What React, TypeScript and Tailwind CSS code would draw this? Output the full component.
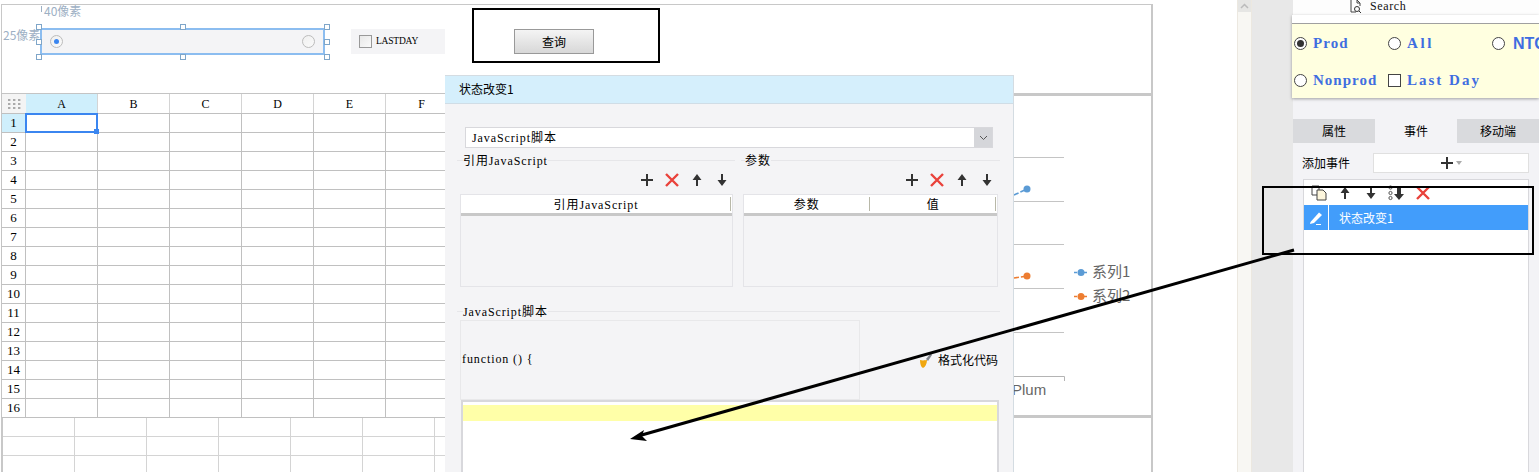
import React from "react";

const SERIF = "font-['Liberation_Serif','Noto_Sans_CJK_SC',serif]";
const CJK = "font-['Noto_Sans_CJK_SC','Liberation_Sans',sans-serif]";
const COLS = ["A", "B", "C", "D", "E", "F", "G", "H", "I", "J", "K", "L", "M"];
const ROWS = Array.from({ length: 16 }, (_, i) => i + 1);

function Plus({ size = 14 }: { size?: number }) {
  return (
    <svg width={size} height={size} viewBox="0 0 14 14">
      <path d="M7 1v12M1 7h12" stroke="#333" strokeWidth="2" fill="none" />
    </svg>
  );
}
function Cross({ size = 14 }: { size?: number }) {
  return (
    <svg width={size} height={size} viewBox="0 0 14 14">
      <path d="M1 1l12 12M13 1L1 13" stroke="#e9423b" strokeWidth="2.4" fill="none" />
    </svg>
  );
}
function Up() {
  return (
    <svg width="12" height="14" viewBox="0 0 12 14">
      <path d="M6 1l4.5 6H7v6H5V7H1.500z" fill="#333" />
    </svg>
  );
}
function Down() {
  return (
    <svg width="12" height="14" viewBox="0 0 12 14">
      <path d="M6 13L1.500 7H5V1h2v6h3.500z" fill="#333" />
    </svg>
  );
}

function Toolbar() {
  return (
    <div className="flex items-center justify-end h-[26px] pr-px">
      {[<Plus key="p" />, <Cross key="c" />, <Up key="u" />, <Down key="d" />].map((icon, i) => (
        <div key={i} className="w-[25px] flex justify-center">
          {icon}
        </div>
      ))}
    </div>
  );
}

function Legend({ title, stub }: { title: string; stub: string }) {
  return (
    <div className="flex items-center h-[14px]">
      <div className={`h-px bg-[#e6e6e9] ${stub}`} />
      <span className={`${SERIF} text-[12px] leading-[14px] tracking-[0.9px] text-black pt-[2px] whitespace-nowrap`}>{title}</span>
      <div className="flex-1 h-px bg-[#e6e6e9]" />
    </div>
  );
}

function Radio({ on }: { on?: boolean }) {
  return (
    <span className="w-[13px] h-[13px] rounded-full border-[1.5px] border-[#bcbcbc] bg-gradient-to-br from-[#f0f0f0] to-[#fafafa] flex items-center justify-center shrink-0">
      {on && <span className="w-[5px] h-[5px] rounded-full bg-[#3b86f0]" />}
    </span>
  );
}

function YRadio({ on }: { on?: boolean }) {
  return (
    <span className="w-[13px] h-[13px] rounded-full border-[1.5px] border-[#444] bg-white flex items-center justify-center shrink-0">
      {on && <span className="w-[7px] h-[7px] rounded-full bg-[#333]" />}
    </span>
  );
}

function Handle({ className }: { className: string }) {
  return <span className={`absolute w-[6px] h-[6px] border border-[#7fa6c9] bg-white ${className}`} />;
}

function Sheet() {
  return (
    <div className={`w-[1012px] h-[325px] overflow-hidden border-t border-l border-[#c4c4c4] ${SERIF}`}>
      <div className="flex h-[20px] border-b border-[#c0c0c0]">
        <div className="w-[24px] shrink-0 bg-[#f4f4f4] flex items-center justify-center">
          <svg width="13" height="10" viewBox="0 0 13 10">
            {[0, 5, 10].map((x) => [0, 4, 8].map((y) => <rect key={`${x}${y}`} x={x} y={y} width="2.400" height="2" fill="#aaa" />))}
          </svg>
        </div>
        {COLS.map((c, i) => (
          <div
            key={c}
            className={`w-[72px] shrink-0 flex items-center justify-center text-[12px] text-black border-r border-[#d4d4d4] ${i === 0 ? "bg-[#cfeffc]" : "bg-white"}`}
          >
            {c}
          </div>
        ))}
      </div>
      {ROWS.map((r) => (
        <div key={r} className="flex h-[19px] border-b border-[#c0c0c0]">
          <div className={`w-[24px] shrink-0 flex items-center justify-center text-[13px] text-black border-r border-[#c0c0c0] ${r === 1 ? "bg-[#cfeffc]" : "bg-white"}`}>
            {r}
          </div>
          {COLS.map((c, i) => (
            <div key={c} className="w-[72px] shrink-0 border-r border-[#c0c0c0] relative">
              {r === 1 && i === 0 && (
                <div className="absolute -left-px -top-px w-[73px] h-[20px] border-2 border-[#3b86f0] z-10">
                  <span className="absolute -right-[3px] -bottom-[3px] w-[5px] h-[5px] bg-[#3b86f0]" />
                </div>
              )}
            </div>
          ))}
        </div>
      ))}
    </div>
  );
}

function Chart() {
  return (
    <div className="w-[140px] h-[325px] border-t-[3px] border-b-[3px] border-r-[2px] border-[#c8c8c8] bg-white relative">
      <svg width="138" height="319" viewBox="1013 96 138 319" className="block">
        {[157, 201, 244, 288, 332].map((y) => (
          <line key={y} x1="1013" x2="1064" y1={y + 0.5} y2={y + 0.5} stroke="#c4c4c4" />
        ))}
        <path d="M1013.500 376.500H1064.500V381" stroke="#b4b4b4" fill="none" />
        <path d="M1014 195l13-6" stroke="#5b9bd5" strokeWidth="1.600" strokeDasharray="5 2" />
        <circle cx="1027" cy="189" r="3.500" fill="#5b9bd5" />
        <path d="M1014 278l13-2" stroke="#ed7d31" strokeWidth="1.600" strokeDasharray="5 2" />
        <circle cx="1027" cy="276" r="3.500" fill="#ed7d31" />
        <path d="M1074 272.500h15" stroke="#5b9bd5" strokeWidth="1.600" strokeDasharray="3 2" />
        <circle cx="1081" cy="272.500" r="3.500" fill="#5b9bd5" />
        <path d="M1074 296.500h15" stroke="#ed7d31" strokeWidth="1.600" strokeDasharray="3 2" />
        <circle cx="1081" cy="296.500" r="3.500" fill="#ed7d31" />
      </svg>
      <div className={`absolute left-[79px] top-[164px] text-[15px] leading-[22px] text-[#666] ${CJK}`}>
        <div>系列1</div>
        <div className="mt-[2px]">系列2</div>
      </div>
      <div className="absolute -left-px top-[284px] text-[15px] leading-[20px] text-[#666] font-['Liberation_Sans',sans-serif]">Plum</div>
    </div>
  );
}

function BottomGrid() {
  return (
    <div className="border-l-2 border-r-2 border-[#c8c8c8] w-[1152px] overflow-hidden">
      {[0, 1, 2].map((r) => (
        <div key={r} className="flex w-[1008px] h-[19px] border-b border-[#d4d4d4]">
          {Array.from({ length: 14 }, (_, i) => (
            <div key={i} className="w-[72px] shrink-0 border-r border-[#d4d4d4]" />
          ))}
        </div>
      ))}
    </div>
  );
}

function THead({ labels }: { labels: string[] }) {
  return (
    <div className="flex h-[21px] bg-white border-b-[3px] border-[#c8c8c8]">
      {labels.map((l) => (
        <div key={l} className="flex-1 flex items-center justify-center relative pt-[2px] -ml-px">
          <span className={`${SERIF} text-[12px] tracking-[0.9px] text-black`}>{l}</span>
          <span className="absolute right-[1px] top-[2px] h-[14px] w-px bg-[#b8b8a8]" />
        </div>
      ))}
    </div>
  );
}

function Dialog() {
  return (
    <div className={`absolute left-[445px] top-[75px] w-[569px] h-[397px] bg-[#f4f4f6] border-t border-r border-[#d4dce2] overflow-hidden ${CJK}`}>
      <div className="h-[28px] bg-[#d5effc] border-b border-[#d0dde6] flex items-center pl-[14px] pb-[2px] text-[12px] text-black">状态改变1</div>
      <div className="pt-[23px] pl-[12px]">
        <div className="ml-[8px] w-[528px] h-[21px] flex bg-white border border-[#d8d8dc]">
          <div className={`flex-1 flex items-center pl-[6px] text-[12px] tracking-[0.9px] text-black ${SERIF}`}>JavaScript脚本</div>
          <div className="w-[18px] bg-[#d5d6da] flex items-center justify-center">
            <svg width="9" height="6" viewBox="0 0 9 6"><path d="M1 1l3.500 3.500L8 1" stroke="#555" fill="none" /></svg>
          </div>
        </div>
        <div className="flex gap-[6px] mt-[5px]">
          <div className="w-[278px]">
            <Legend title="引用JavaScript" stub="w-[6px]" />
            <Toolbar />
            <div className="mt-px ml-[3px] w-[273px] h-[93px] border border-[#e4e4e8]">
              <THead labels={["引用JavaScript"]} />
            </div>
          </div>
          <div className="w-[259px]">
            <Legend title="参数" stub="w-[4px]" />
            <Toolbar />
            <div className="mt-px ml-[2px] w-[255px] h-[93px] border border-[#e4e4e8]">
              <THead labels={["参数", "值"]} />
            </div>
          </div>
        </div>
        <div className="w-[543px] mt-[17px]">
          <Legend title="JavaScript脚本" stub="w-[6px]" />
        </div>
        <div className="flex mt-[2px] w-[541px]">
          <div className={`ml-[3px] w-[400px] h-[80px] border border-[#e8e8ea] flex items-center pl-[1px] pb-[2px] text-[12px] tracking-[0.9px] text-black ${SERIF}`}>
            function () {"{"}
          </div>
          <div className="flex-1 flex items-center justify-end gap-[5px]">
            <svg width="14" height="18" viewBox="0 0 14 18">
              <path d="M1 9c3 1 6 0 7 0 0 4-2 7-4 8-2-1-3-4-3-8z" fill="#f0a70f" />
              <path d="M7 8l5-6 1 2-4 6z" fill="#80848c" />
            </svg>
            <span className="text-[12px] text-black">格式化代码</span>
          </div>
        </div>
        <div className="ml-[4px] w-[538px] h-[90px] bg-white border-2 border-[#d8d8dc] pt-[3px]">
          <div className="h-[16px] bg-[#ffffa8]" />
        </div>
      </div>
    </div>
  );
}

function RightPanel() {
  return (
    <div className="w-[246px] h-[472px] flex flex-col bg-white">
      <div className={`h-[15px] bg-[#fdfdfd] flex items-center pl-[57px] pb-[3px] gap-[7px] text-[12px] tracking-[0.6px] text-[#111] ${SERIF}`}>
        <svg width="13" height="13" viewBox="0 0 13 13">
          <path d="M1 0v12h5M7 0l3 3v3M7 0v3h3" stroke="#444" fill="none" />
          <circle cx="7" cy="9" r="2.500" stroke="#333" fill="none" />
          <path d="M9 11l2 2" stroke="#333" />
        </svg>
        Search
      </div>
      <div className="h-[83px] bg-[#ffffe0] shadow-[0_1px_3px_rgba(0,0,0,0.35)] relative z-10 -ml-px overflow-hidden">
        <div className="h-[9px] bg-white border-b border-[#a0a0a0]" />
        <div className={`grid grid-cols-[94px_104px_1fr] auto-rows-[37px] pl-[2px] text-[15px] font-bold text-[#3f6ee0] leading-none pt-[1px] ${SERIF}`}>
          <div className="flex items-center gap-[6px] tracking-[1.1px]"><YRadio on />Prod</div>
          <div className="flex items-center gap-[6px] tracking-[2.6px]"><YRadio />All</div>
          <div className="flex items-center gap-[8px] whitespace-nowrap font-['Liberation_Sans',sans-serif] text-[16px]"><YRadio />NTC</div>
          <div className="flex items-center gap-[6px] tracking-[1px] whitespace-nowrap"><YRadio />Nonprod</div>
          <div className="flex items-center gap-[6px] tracking-[2px] whitespace-nowrap pb-px">
            <span className="w-[13px] h-[13px] border-[1.5px] border-[#444] bg-white shrink-0" />Last Day
          </div>
        </div>
      </div>
      <div className={`flex-1 bg-[#f3f3f6] pt-[21px] flex flex-col ${CJK}`}>
        <div className="grid grid-cols-3 h-[24px] text-[12px] text-black">
          <div className="bg-[#d9dadd] flex items-center justify-center">属性</div>
          <div className="flex items-center justify-center">事件</div>
          <div className="bg-[#d9dadd] flex items-center justify-center">移动端</div>
        </div>
        <div className="flex items-center h-[20px] mt-[10px] pl-[9px] pr-[10px] text-[12px] text-black">
          <span className="w-[71px]">添加事件</span>
          <div className="flex-1 h-[20px] bg-white border border-[#e0e0e0] flex items-center justify-center gap-[2px]">
            <Plus size={14} />
            <svg width="6" height="4" viewBox="0 0 6 4"><path d="M0 0h6L3 4z" fill="#aaa" /></svg>
          </div>
        </div>
        <div className="flex-1 mt-[6px] ml-[10px] mr-[10px] bg-white border border-[#d8d8dc] border-b-0">
          <div className="h-[25px] flex items-center">
            <div className="ml-[7px]">
              <svg width="17" height="16" viewBox="0 0 17 16">
                <path d="M1 1h7v9H1z" fill="#fff" stroke="#444" />
                <path d="M6 5h6l3 3v7H6z" fill="#fdf6dc" stroke="#444" />
              </svg>
            </div>
            <div className="ml-[11px]"><Up /></div>
            <div className="ml-[14px]"><Down /></div>
            <div className="ml-[11px] flex items-center">
              <svg width="18" height="16" viewBox="0 0 18 16">
                <circle cx="2.500" cy="2.500" r="1.600" fill="none" stroke="#555" />
                <circle cx="2.500" cy="8" r="1.600" fill="none" stroke="#555" />
                <circle cx="2.500" cy="13" r="1.600" fill="none" stroke="#555" />
                <path d="M11 15L6 9h3V1h4v8h3z" fill="#333" />
              </svg>
            </div>
            <div className="ml-[10px]"><Cross /></div>
          </div>
          <div className="h-[25px] bg-[#429dfb] flex items-center text-[12px] text-white">
            <div className="w-[25px] h-full flex items-center justify-center border-r border-white">
              <svg width="15" height="14" viewBox="0 0 15 14">
                <path d="M1.500 11L10 1.500l3 2.500-8 8-4 1z" fill="#fff" />
                <path d="M7 13.500h5" stroke="#fff" />
              </svg>
            </div>
            <span className="ml-[10px]">状态改变1</span>
          </div>
        </div>
      </div>
    </div>
  );
}

export default function App() {
  return (
    <div className="relative w-[1539px] h-[472px] overflow-hidden bg-white flex">
      <div className="w-[1153px] shrink-0 pt-[4px] pl-px">
        <div className="w-[1152px] h-[89px] border-t border-l border-r-2 border-[#c8c8c8] relative">
          <div className={`absolute left-[42px] top-0 text-[12px] leading-[12px] text-[#9db0c4] ${CJK}`}>40像素</div>
          <div className={`absolute left-[1px] top-[23px] text-[12px] leading-[14px] text-[#9db0c4] ${CJK}`}>25像素</div>
          <span className="absolute left-[39px] top-px h-[6px] w-px bg-[#9db0c4]" />
          <div className="flex items-start pl-[38px] pt-[23px]">
            <div className="relative w-[285px] h-[27px] bg-[#f4f4f6] border-2 border-[#8cbdf0] flex items-center justify-between px-[8px]">
              <Radio on />
              <Radio />
              <Handle className="-left-[6px] -top-[6px]" />
              <Handle className="left-[138px] -top-[6px]" />
              <Handle className="-right-[7px] -top-[6px]" />
              <Handle className="-left-[6px] top-[9px]" />
              <Handle className="-right-[7px] top-[9px]" />
              <Handle className="-left-[6px] -bottom-[7px]" />
              <Handle className="left-[138px] -bottom-[7px]" />
              <Handle className="-right-[7px] -bottom-[7px]" />
            </div>
            <div className={`ml-[26px] mt-px w-[94px] h-[25px] bg-[#f4f4f6] flex items-center pl-[8px] gap-[4px] text-[9.5px] tracking-[-0.2px] text-black ${SERIF}`}>
              <span className="w-[13px] h-[13px] border border-[#999] bg-gradient-to-br from-[#e8e8e8] to-[#fafafa] shrink-0" />
              LASTDAY
            </div>
            <div className="ml-[27px] w-[188px] h-[55px] -mt-[20px] border-2 border-black pl-[40px] pt-[19px]">
              <button className={`block w-[80px] h-[25px] border border-[#999] bg-gradient-to-b from-[#f4f4f4] to-[#d8d8d8] text-[12px] text-black ${CJK}`}>查询</button>
            </div>
          </div>
        </div>
        <div className="flex">
          <Sheet />
          <Chart />
        </div>
        <BottomGrid />
      </div>
      <div className="w-[84px] shrink-0" />
      <div className="w-[15px] shrink-0 bg-[#f8f7f3] border-l border-r border-[#ece8e0]">
        <div className="w-full h-[12px] bg-[#e6e6e4] flex items-center justify-center">
          <svg width="9" height="6" viewBox="0 0 9 6"><path d="M1 5l3.500-3.500L8 5" stroke="#bbb" strokeWidth="1.500" fill="none" /></svg>
        </div>
      </div>
      <div className="w-[41px] shrink-0 bg-[#e8e8e8]" />
      <RightPanel />
      <Dialog />
      <svg className="absolute left-0 top-0 pointer-events-none" width="1539" height="472" viewBox="0 0 1539 472">
        <rect x="1263" y="187" width="270" height="67" fill="none" stroke="#000" strokeWidth="2" />
        <path d="M1294 250L640 435.500" stroke="#000" strokeWidth="3" fill="none" />
        <path d="M630 439l14-9-2 6 5 5z" fill="#000" />
      </svg>
    </div>
  );
}
